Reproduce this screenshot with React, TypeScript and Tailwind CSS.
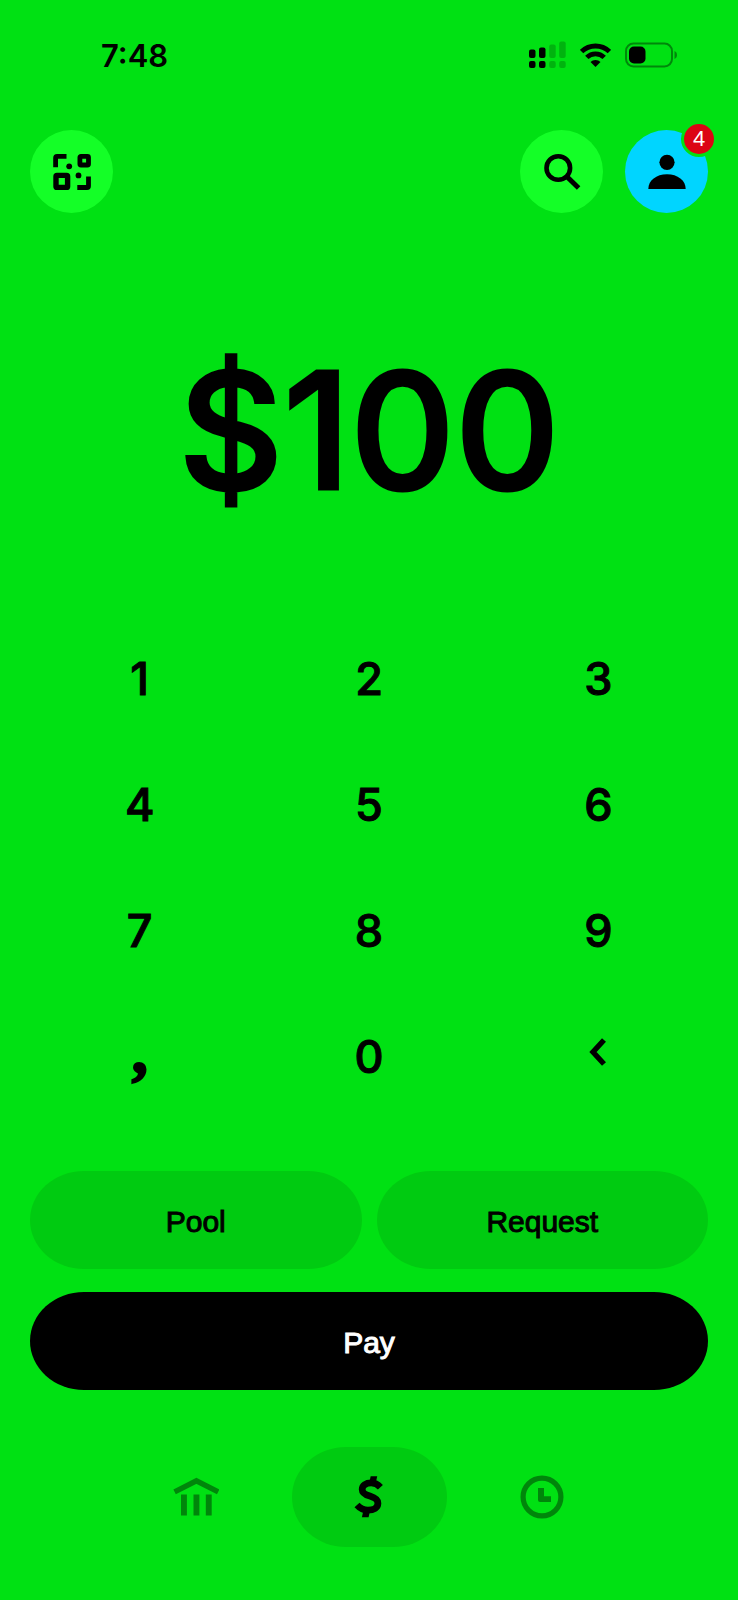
import { useState } from "react";

const KEYS = ["1", "2", "3", "4", "5", "6", "7", "8", "9", ",", "0", "back"];

const StatusBar = () => (
  <div className="flex h-8 items-center justify-between pl-[101px] pr-[60px]">
    <span className="text-[31px] leading-8 font-semibold">7:48</span>
    <div className="flex items-center gap-[14px] pb-0.5">
      {/* Dual SIM signal */}
      <svg width="37" height="28" viewBox="0 0 37 28" aria-label="Signal">
        <rect x="0" y="8.5" width="6.5" height="8.5" rx="2" />
        <rect x="10" y="6.5" width="6.5" height="10.5" rx="2" />
        <rect x="0" y="20" width="6.5" height="7" rx="2" />
        <rect x="10" y="20" width="6.5" height="7" rx="2" />
        <g opacity="0.2">
          <rect x="20.2" y="3.5" width="6.5" height="13.5" rx="2" />
          <rect x="30.2" y="0.5" width="6.5" height="16.5" rx="2" />
          <rect x="20.2" y="20" width="6.5" height="7" rx="2" />
          <rect x="30.2" y="20" width="6.5" height="7" rx="2" />
        </g>
      </svg>
      <svg width="31" height="26" viewBox="0 0 31 26" aria-label="Wi-Fi">
        <g fill="none" stroke="black" strokeWidth="4.8">
          <path d="M1.6 9.6 A 20 20 0 0 1 29.4 9.6" />
          <path d="M6.8 15.4 A 12.4 12.4 0 0 1 24.2 15.4" />
        </g>
        <path d="M15.5 25 L10.5 20 A 7 7 0 0 1 20.5 20 Z" />
      </svg>
      <svg width="53" height="26" viewBox="0 0 53 26" aria-label="Battery">
        <rect
          x="1"
          y="1.5"
          width="46"
          height="23"
          rx="7.5"
          fill="none"
          stroke="black"
          strokeOpacity="0.4"
          strokeWidth="2"
        />
        <rect x="4" y="4.5" width="16.5" height="17" rx="5" />
        <path d="M49.5 9 C52.8 10.2 52.8 15.8 49.5 17 Z" opacity="0.4" />
      </svg>
    </div>
  </div>
);

const ScanIcon = () => (
  <svg width="40" height="40" viewBox="0 0 40 40">
    <g fill="none" stroke="black" strokeWidth="4.8">
      <path d="M3.6 15.2 V5.9 Q3.6 4.4 5.1 4.4 H14.5" />
      <rect x="27.9" y="4.4" width="8.6" height="8.6" rx="1" />
      <rect x="4" y="23.4" width="11.6" height="12" rx="1" strokeWidth="5.4" />
      <path d="M36.5 24.5 V34 Q36.5 35.5 35 35.5 H25.3" />
    </g>
    <circle cx="17.2" cy="14.3" r="2.9" />
    <circle cx="26.5" cy="23.4" r="2.9" />
  </svg>
);

const SearchIcon = () => (
  <svg width="40" height="40" viewBox="0 0 40 40">
    <g fill="none" stroke="black">
      <circle cx="16.3" cy="16" r="11.8" strokeWidth="4.6" />
      <path d="M24.5 24.2 L36.6 36" strokeWidth="5" />
    </g>
  </svg>
);

const ProfileIcon = () => (
  <svg width="40" height="40" viewBox="0 0 40 40">
    <circle cx="20" cy="10.3" r="7.6" />
    <path d="M1.3 37 C1.3 28.5 9.3 22.3 20 22.3 S38.7 28.5 38.7 37 Z" />
  </svg>
);

const BackIcon = () => (
  <svg width="20" height="28" viewBox="0 0 20 28">
    <path
      d="M16 2 L5 14 L16 26"
      fill="none"
      stroke="black"
      strokeWidth="5.4"
    />
  </svg>
);

const BankIcon = () => (
  <svg width="46" height="44" viewBox="0 0 46 44">
    <path d="M1.6 16.8 L23.4 5.8 L45.2 16.8" fill="none" stroke="black" strokeWidth="5.4" />
    <path d="M8 19.5 h5.9 v21 H8z M20.5 19.5 h5.9 v21 h-5.9z M32.8 19.5 h5.9 v21 h-5.9z" />
  </svg>
);

const CashIcon = () => (
  <svg width="40" height="54" viewBox="0 0 40 54">
    <g fill="none" stroke="black" strokeWidth="6.8">
      <path d="M31.4 17.3 C28.7 14.4 25.7 12.9 22.2 12.9 C16.7 12.9 13.2 15.6 13.2 19.4 C13.2 23.2 16.4 24.7 20.9 26.1 C25.9 27.7 28.9 29.6 28.9 33.2 C28.9 37.6 24.7 40.2 19 40.2 C14.9 40.2 11 38.3 8 35" />
    </g>
    <path d="M21.7 6.3 H28.2 L26.8 12.8 H20.2 Z" />
    <path d="M12.9 47.3 H19.6 L21 40.8 H14.3 Z" />
  </svg>
);

const ClockIcon = () => (
  <svg width="44" height="44" viewBox="0 0 44 44">
    <circle cx="22" cy="22" r="18.9" fill="none" stroke="black" strokeWidth="5.2" />
    <path d="M18 13 h6 v8.3 h7 v5.7 H20 q-2 0 -2 -2 Z" />
  </svg>
);

const App = () => {
  const [amount, setAmount] = useState("100");

  const handleKey = (key: string) => {
    if (key === "back") {
      setAmount((prev) => prev.slice(0, -1) || "0");
      return;
    }
    setAmount((prev) => (prev === "0" && key !== "," ? key : prev + key));
  };

  return (
    <div className="flex min-h-screen flex-col bg-[#00e113] pt-10 pb-[53px] font-[Inter,sans-serif] text-black">
      <StatusBar />

      {/* Header */}
      <header className="mt-[58px] flex items-center justify-between px-[30px]">
        <button
          type="button"
          aria-label="Scan"
          className="flex size-[83px] items-center justify-center rounded-full bg-[#14ff27]"
        >
          <ScanIcon />
        </button>
        <div className="flex gap-[22px]">
          <button
            type="button"
            aria-label="Search"
            className="flex size-[83px] items-center justify-center rounded-full bg-[#14ff27]"
          >
            <SearchIcon />
          </button>
          <button
            type="button"
            aria-label="Profile"
            className="relative flex size-[83px] items-center justify-center rounded-full bg-[#00d5ff]"
          >
            <ProfileIcon />
            <span className="absolute -top-[9px] -right-[9px] flex size-9 items-center justify-center rounded-full border-3 border-[#00e113] bg-[#dc0414] font-['Liberation_Sans',sans-serif] text-[22px] leading-none text-white">
              4
            </span>
          </button>
        </div>
      </header>

      {/* Amount */}
      <div className="flex flex-1 items-center justify-center pt-[31px] text-[162px] leading-none font-medium [-webkit-text-stroke:3px]">
        ${amount}
      </div>

      {/* Keypad */}
      <div className="grid grid-cols-3 px-[25px]">
        {KEYS.map((key) => (
          <button
            key={key}
            type="button"
            aria-label={key === "back" ? "Delete" : key}
            onClick={() => handleKey(key)}
            className="flex h-[126px] items-center justify-center text-[45px] leading-none font-medium [-webkit-text-stroke:1px]"
          >
            {key === "back" ? (
              <span className="pb-2">
                <BackIcon />
              </span>
            ) : key === "," ? (
              <span className="pb-2.5 font-['Liberation_Serif',serif] text-[66px] font-bold [-webkit-text-stroke:2px]">
                ,
              </span>
            ) : (
              key
            )}
          </button>
        ))}
      </div>

      {/* Actions */}
      <div className="mt-[52px] grid grid-cols-2 gap-x-[15px] gap-y-[23px] px-[30px] font-['Liberation_Sans',sans-serif] text-[30px] leading-none [-webkit-text-stroke:1px]">
        <button type="button" className="h-[98px] rounded-[54px/49px] bg-[#00cb11] pt-[3px]">
          Pool
        </button>
        <button type="button" className="h-[98px] rounded-[54px/49px] bg-[#00cb11] pt-[3px]">
          Request
        </button>
        <button
          type="button"
          className="col-span-2 h-[98px] rounded-[54px/49px] bg-black pt-[3px] text-white"
        >
          Pay
        </button>
      </div>

      {/* Tabs */}
      <nav className="mt-[57px] flex justify-center gap-[18px]">
        <button
          type="button"
          aria-label="Banking"
          className="flex h-[100px] w-[155px] items-center justify-center opacity-40"
        >
          <BankIcon />
        </button>
        <button
          type="button"
          aria-label="Cash"
          className="flex h-[100px] w-[155px] items-center justify-center rounded-[54px/50px] bg-[#00cb11]"
        >
          <CashIcon />
        </button>
        <button
          type="button"
          aria-label="Activity"
          className="flex h-[100px] w-[155px] items-center justify-center opacity-40"
        >
          <ClockIcon />
        </button>
      </nav>
    </div>
  );
};

export default App;
